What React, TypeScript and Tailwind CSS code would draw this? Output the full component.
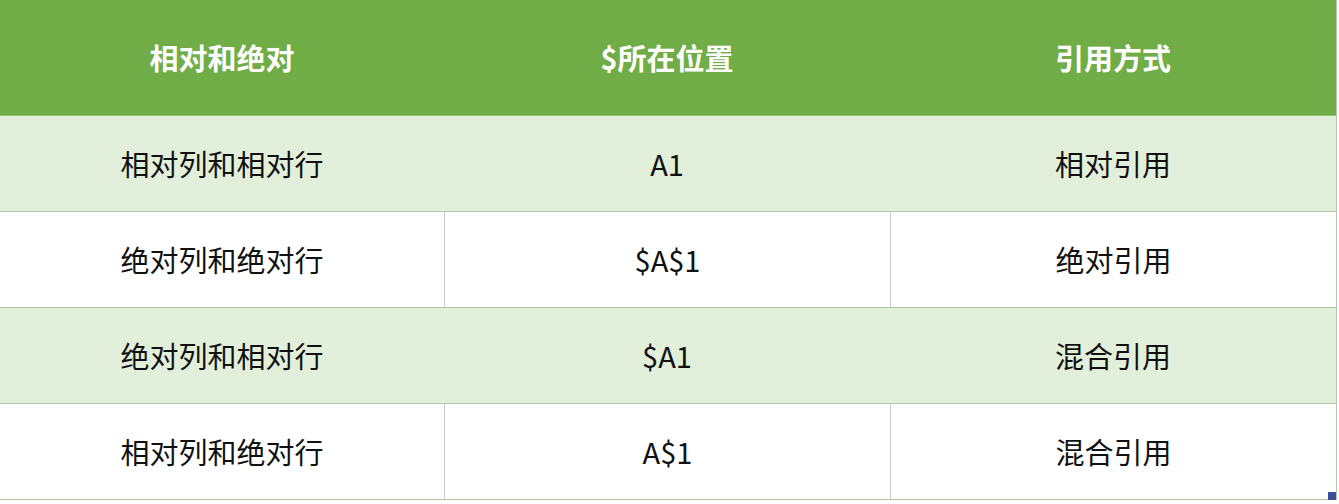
const HEAD = ['相对和绝对', '$所在位置', '引用方式']

const ROWS: { cells: string[]; shaded: boolean }[] = [
  { cells: ['相对列和相对行', 'A1', '相对引用'], shaded: true },
  { cells: ['绝对列和绝对行', '$A$1', '绝对引用'], shaded: false },
  { cells: ['绝对列和相对行', '$A1', '混合引用'], shaded: true },
  { cells: ['相对列和绝对行', 'A$1', '混合引用'], shaded: false },
]

const FONT = "font-['Noto_Sans_CJK_SC','Noto_Sans',sans-serif]"

export default function App() {
  return (
    <div className={`w-[1339px] h-[504px] bg-white overflow-hidden ${FONT}`}>
      <div className="relative w-[1337px] border-r border-[#b9c9b0]">
        {/* header */}
        <div className="grid grid-cols-[444px_446px_446px] h-[116px] bg-[#70ad47] border-b border-[#8fbf6f] text-white text-[29px] font-bold">
          {HEAD.map((h) => (
            <div key={h} className="flex items-center justify-center pt-[1px]">
              {h}
            </div>
          ))}
        </div>

        {/* body */}
        {ROWS.map((row, i) => (
          <div
            key={i}
            className={`grid grid-cols-[444px_446px_446px] h-[96px] border-b border-[#adc99e] text-[29px] text-[#111] ${
              row.shaded ? 'bg-[#e2efda]' : 'bg-white'
            }`}
          >
            {row.cells.map((c, j) => (
              <div
                key={j}
                className={`flex items-center justify-center pt-[1px] ${
                  !row.shaded && j > 0 ? 'border-l border-[#c8c8c8]' : ''
                }`}
              >
                {c}
              </div>
            ))}
          </div>
        ))}

        {/* selection handle */}
        <div className="absolute right-0 bottom-0 w-[8px] h-[8px] bg-[#3c4f9c]" />
      </div>
    </div>
  )
}
